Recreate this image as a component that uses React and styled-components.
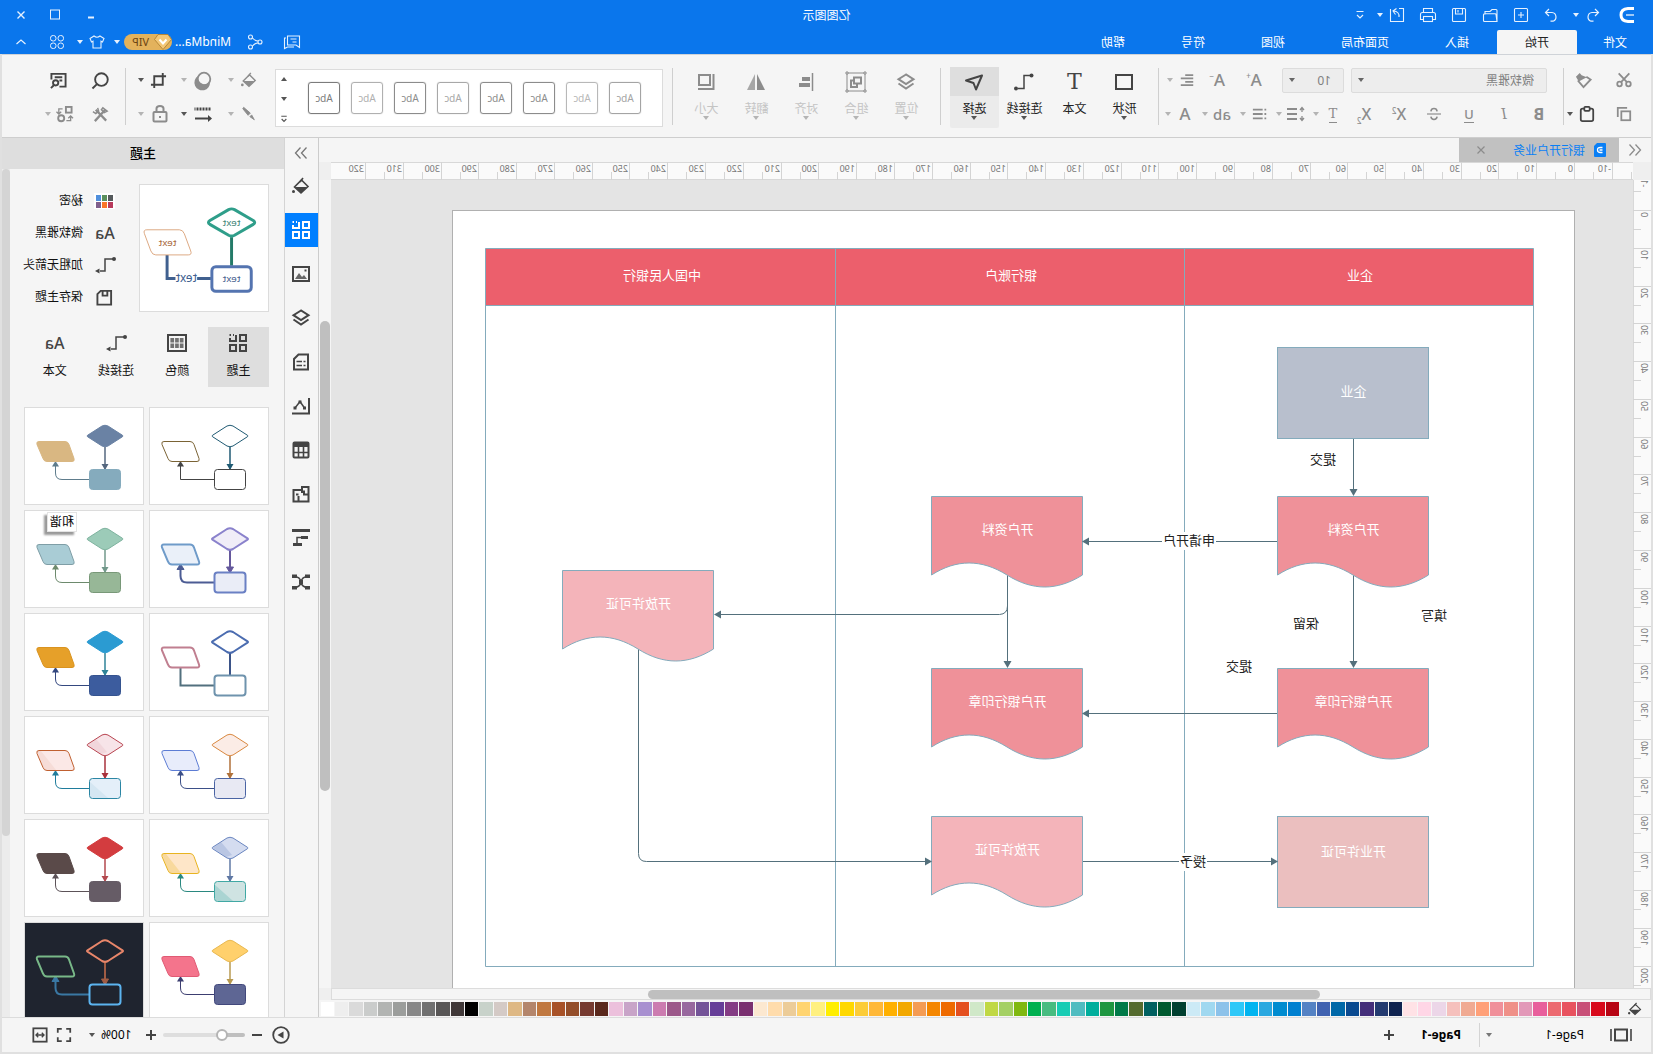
import React, { useState } from 'react';
import styled, { createGlobalStyle, css } from 'styled-components';

const GlobalStyle = createGlobalStyle`
    * { box-sizing:border-box; }
    body { margin:0; background:#f5f5f5; overflow:hidden;
        font-family:"Noto Sans", "Noto Sans CJK SC", sans-serif;
        font-size:12px; line-height:16px; color:#111;
    }
    button { border:0; padding:0; margin:0; background:none; font:inherit; color:inherit; cursor:pointer; }
    ul { list-style:none; margin:0; padding:0; }
    svg { display:block; }
`;

// the whole window is flipped left to right
const Window = styled.div`
    display:flex; flex-direction:column;
    height:100vh; overflow:hidden;
    transform:scaleX(-1);
`;

/* ---------- icons, 18 x 18 ---------- */

const icons = {
    undo: <path d="M7 3L3.5 6.5 7 10M3.5 6.5H10a4.5 4.5 0 0 1 1 8.7H8.5" />,
    redo: <path d="M11 3l3.5 3.5L11 10M14.5 6.5H8a4.5 4.5 0 0 0-1 8.7h2.5" />,
    add: <><rect x="2.5" y="2.5" width="13" height="13" rx="1" /><path d="M9 6v6M6 9h6" /></>,
    folder: <path d="M2 15.5V4.5q0-1 1-1h4l2 2h5v3M2 15.5l1-7q0-.8 1-.8h10.5q1 0 1 1v5.8q0 1-1 1z" />,
    save: <><path d="M2.5 3.5q0-1 1-1h11q1 0 1 1v11q0 1-1 1h-11q-1 0-1-1z" /><path d="M5.5 2.5V8h7V2.5M10 4v2.5" /></>,
    print: <><path d="M4.5 6.5v-4h9v4M4.5 13.5h-3v-5q0-2 2-2h11q2 0 2 2v5h-3" /><rect x="4.5" y="10.5" width="9" height="5" /></>,
    share: <path d="M7 2.5H2.5v13h13V3M7 11q-.5-5.500 5.500-6M9.500 2.500l3.500 2.500-2.500 3.500" />,
    more: <path d="M5.5 5.5h7M6 9l3 3 3-3" />,
    min: <path d="M6 11.5h6" strokeWidth="2" />,
    max: <rect x="4.5" y="4" width="9" height="9" />,
    close: <path d="M5.5 5.5l7 7M12.5 5.5l-7 7" />,
    comment: <><path d="M1.5 3H13.500v9H5l-3.500 2.500zM4.500 6h6M4.500 9h4" /><path d="M15 5h1.500v10.500L13.500 14H7" /></>,
    nodes: <><circle cx="13.5" cy="4" r="2" /><circle cx="4" cy="9" r="2" /><circle cx="13.5" cy="14" r="2" /><path d="M6 8q3 0 5.5-3M6 10q3 0 5.5 3" transform="matrix(1 0 0 1 0 0)" /></>,
    shirt: <path d="M6 3L2 5.5 3.500 9 5 8.200V15h8V8.200l1.500.8L16 5.5 12 3q-3 2.500-6 0z" />,
    clover: <><rect x="2.5" y="2.5" width="5.5" height="5.5" rx="2.5" /><rect x="10" y="2.5" width="5.5" height="5.5" rx="2.5" /><rect x="2.5" y="10" width="5.5" height="5.5" rx="2.5" /><rect x="10" y="10" width="5.5" height="5.5" rx="2.5" /></>,
    up: <path d="M4.5 11L9 7l4.5 4" />,
    cut: <><circle cx="4" cy="13.5" r="2.6" /><circle cx="14" cy="13.5" r="2.6" /><path d="M3 1.5L12.3 11.5M15 1.5L5.7 11.5" /></>,
    brush: <><path d="M6 5L1.5 8 9 16l6-7" /><path d="M5.5 5.5L11 3.5 13 1l4 4-3 5z" fill="currentColor" stroke="none" /></>,
    copy: <><rect x="2" y="6" width="10" height="10" /><path d="M5.5 2H16v10.5" /></>,
    paste: <><rect x="2" y="3" width="14" height="14" rx="2" /><rect x="6" y="1" width="6" height="4.5" rx="1" fill="#f5f5f5" /></>,
    align: <path d="M2 3.5h9M2 7.2h14M2 11h9M2 14.7h14" />,
    strike: <><path d="M0 9h18" strokeWidth="1.5" /><path d="M13 5.5Q12.5 2 9 2T5 5.5M5 12.5q.5 3.5 4 3.5t4-3.5" /></>,
    spacing: <><path d="M8 4h10M8 9h10M8 14h10" /><path d="M3 3v4M3 11v4M1 5l2-2.5L5 5M1 13l2 2.5L5 13" strokeWidth="1.3" /></>,
    bullets: <path d="M2 4h2M2 9h2M2 14h2M6 4h11M6 9h11M6 14h11" />,
    box: <rect x="1" y="2" width="16" height="14" strokeWidth="2" />,
    line: <><path d="M2.5 2.5H9v13h6" strokeWidth="1.5" /><circle cx="1.5" cy="2.5" r="2" fill="currentColor" stroke="none" /><circle cx="17" cy="15.5" r="2" fill="currentColor" stroke="none" /></>,
    lineArrow: <><path d="M0 3h9v12h5" strokeWidth="1.5" /><circle cx="0" cy="3" r="2" fill="currentColor" stroke="none" /><path d="M14.5 12.5v5L19 15z" fill="currentColor" stroke="none" /></>,
    pointer: <path d="M1 2.5L17 7.5 9.500 10 7 16.5z" strokeWidth="2" strokeLinejoin="round" />,
    layers: <><path d="M9 1.5l7.5 4.7L9 11 1.5 6.2z" /><path d="M1.5 10.5L9 15.5l7.5-5" /></>,
    group: <><rect x="0" y="0" width="18" height="18" strokeWidth="1" /><rect x="4" y="4.5" width="7" height="6" /><path d="M11 7.5h3V14H8v-3" /><path d="M-1-1h2v2h-2zM17-1h2v2h-2zM-1 17h2v2h-2zM17 17h2v2h-2z" fill="#f5f5f5" strokeWidth="1" /></>,
    alignLeft: <><path d="M2.5 0v18" strokeWidth="1.5" /><path d="M5 6h8M5 12h11" strokeWidth="4" /></>,
    flip: <><path d="M8 1v16H0z" fill="currentColor" stroke="none" /><path d="M10 1v16h8z" fill="currentColor" stroke="none" opacity=".75" /></>,
    resize: <><rect x="5" y="2" width="11" height="10" /><path d="M1.5 1v15H17" /></>,
    bucket: <><path d="M8.5 3L2 9.5 9 16l6.5-6z" strokeWidth="1.6" /><path d="M3 10h12l-6 6z" fill="currentColor" stroke="none" /><path d="M7 1l3 4" strokeWidth="1.6" /><circle cx="16.5" cy="14.5" r="1.5" fill="currentColor" stroke="none" /></>,
    effect: <><circle cx="8" cy="8" r="6.3" strokeWidth="1.8" /><path d="M2 11a7.8 7.8 0 1 0 12-6 7 7 0 0 1-12 6z" fill="currentColor" stroke="none" /></>,
    crop: <path d="M4.5 1v12.5H17M1 4.5h12.5V17" />,
    search: <><circle cx="8" cy="8" r="6.7" /><path d="M12.5 12.5L17.5 17.5" /></>,
    findPage: <><path d="M8 15.5H1.5V2h15v6M5 5.5h8M5 9h3" /><circle cx="12" cy="11.5" r="2.8" /><path d="M14 14l3 3" /></>,
    pen: <path d="M15 1.5L7.5 8l2.5 2.5L16 3zM6 10l2 2-5 3.5z" fill="currentColor" strokeWidth="1" />,
    dash: <><path d="M1.5 4h16" strokeDasharray="2 1" strokeWidth="3" /><path d="M3 13.5h14" /><path d="M4 10v7L0 13.5z" fill="currentColor" stroke="none" /></>,
    lock: <><rect x="2.5" y="7" width="13" height="9.5" rx="1" /><path d="M5.5 7V3.5Q5.5 1 9 1t3.5 2.5V7M9 11v2" /></>,
    tools: <><path d="M4 4l11 12M14 4L3 15.5" strokeWidth="2.4" /><path d="M2 5.5L6.5 2 8 4 5 7zM12 2l-1 3.5 3 2.5 3-2" strokeWidth="1.6" /></>,
    replace: <><rect x="1.5" y="1" width="6" height="6" /><circle cx="12.5" cy="13" r="3.2" /><path d="M11 3h4v5M7 15.5H2.5V11M5 13l-2.5-2.5L0 13M12.5 6l2.5 2.5L17.5 6" strokeWidth="1.4" /></>,
    chevrons: <path d="M9.5 3.5L4.5 9l5 5.5M15.500 3.5L10.5 9l5 5.5" strokeWidth="1.3" transform="translate(-1 0)" />,
    theme: <><rect x="1" y="1" width="6" height="6" /><path d="M11 1v6h6V4M13 1h1M16 1h1.5" /><rect x="1" y="11" width="6" height="6" /><rect x="11" y="11" width="6" height="6" /></>,
    image: <><rect x="1" y="2" width="16" height="14" /><path d="M15 14l-4-6-3 4-2-2-3 4z" fill="currentColor" stroke="none" opacity=".8" /><path d="M3.5 5.5h2" /></>,
    page: <><path d="M16 1.500H6.500L2 6v10.500h14z" transform="matrix(-1 0 0 1 18 0)" /><path d="M4.5 8.5h2M8 8.5h5.5M4.5 12.5h2M8 12.5h5.5" strokeWidth="1.6" /></>,
    chart: <><path d="M1 1v15.5H18" /><path d="M5.5 11l4.5-6.5L15 11" strokeWidth="1.5" /><path d="M4 9.5h3v3H4zM13.5 9.5h3v3h-3zM8.5 3.5h3v3h-3z" fill="currentColor" stroke="none" /></>,
    table: <><rect x="1.5" y="1.5" width="15" height="15" rx="1" /><path d="M1.5 4h15" strokeWidth="4" /><path d="M1.5 11.5h15M6.5 6v11M11.5 6v11" strokeWidth="1.6" /></>,
    floor: <path d="M1.5 2H8v3h8.500v11.500H1.5zM1.5 9.500H6V5.500M8 5v3M11.500 16v-5M11.500 9.500H14" />,
    gantt: <><path d="M0 1.5h18" strokeWidth="3" /><path d="M2 8.5h7M8 15.5h9" strokeWidth="3" /><path d="M9 8.5h4v6" strokeWidth="1.5" /></>,
    mind: <><path d="M2 3.5q6 0 7 5.5 1-5.5 7-5.5M2 14.5q6 0 7-5.5 1 5.5 7 5.5M7 9h4" strokeWidth="1.5" /><path d="M0 1.5h5V5H0zM13 1.5h5V5h-5zM0 13h5v3.5H0zM13 13h5v3.5h-5zM7 7h4v4H7z" fill="currentColor" stroke="none" /></>,
    disk: <><path d="M2 2h11l3.5 3.5V16.5H2z" /><path d="M6 2v5h5V2" /></>,
    swatches: <><rect x="0" y="1" width="18" height="16" /><path d="M2.5 4h3.7v4.5H2.5zM7.2 4h3.7v4.5H7.2zM11.9 4h3.7v4.5h-3.7zM2.5 9.5h3.7V14H2.5zM7.2 9.5h3.7V14H7.2zM11.9 9.5h3.7V14h-3.7z" fill="currentColor" stroke="none" opacity=".75" /></>,
    pages: <><rect x="3" y="3.5" width="12" height="11" /><path d="M-1 3v12M19 3v12" strokeWidth="1.6" /></>,
    plus: <path d="M9 4v10M4 9h10" />,
    minus: <path d="M4 9h10" />,
    play: <><circle cx="9" cy="9" r="7.8" strokeWidth="1.8" /><path d="M6.5 5.5v7L12.5 9z" fill="currentColor" stroke="none" /></>,
    full: <path d="M2 6.5V2h4.5M11.5 2H16v4.5M16 11.5V16h-4.5M6.5 16H2v-4.5" />,
    fit: <><rect x="1.5" y="1.5" width="15" height="15" /><path d="M5.5 9h7M7 6.5L4.5 9 7 11.5M11 6.5L13.5 9 11 11.5" strokeWidth="1.5" /></>,
};

const Icon = ({ name, size = 18, weight = 2 }) => (
    <svg width={size} height={size} viewBox="0 0 18 18" fill="none" stroke="currentColor"
        strokeWidth={weight} overflow="visible" aria-hidden="true">{icons[name]}</svg>
);

const Caret = styled.i`
    display:block; width:0; height:0;
    border:3px solid transparent; border-top:4px solid currentColor; border-bottom:0;
    ${({ $up }) => $up && css`border-top:0; border-bottom:4px solid currentColor;`}
`;

const Btn = styled.button`
    display:flex; align-items:center; justify-content:center; flex:none;
    width:24px; height:24px;
    margin-left:${({ $ml }) => $ml || 0}px;
    color:${({ $tone }) => $tone === 'dark' ? '#444' : $tone === 'light' ? '#e6f1fe' : '#8c8c8c'};
`;

const Drop = styled.button`
    display:flex; align-items:center; justify-content:center; flex:none;
    width:10px; height:20px;
    margin-left:${({ $ml }) => $ml || 0}px;
    color:${({ $tone }) => $tone === 'dark' ? '#555' : $tone === 'light' ? '#e6f1fe' : '#b4b4b4'};
`;

const IconBtn = ({ icon, label, weight, size, ...rest }) => (
    <Btn aria-label={label || icon} {...rest}><Icon name={icon} weight={weight} size={size} /></Btn>
);
const DropBtn = (props) => <Drop aria-label="more options" {...props}><Caret /></Drop>;

/* ---------- header ---------- */

const HeaderBlock = styled.header`
    flex:none; background:#0a76ec; color:#fff;
    .row { display:flex; align-items:center; justify-content:space-between; height:30px; }
    .row.menu { height:24px; align-items:stretch; }
    .side { display:flex; align-items:center; flex:1; padding:0 9px; }
    .side.end { justify-content:flex-end; }
    h1 { margin:0; padding-top:1px; font-size:12px; font-weight:400; }
    .logo { margin-left:5px; width:24px; display:flex; justify-content:center; }
    .account { margin:0 3px 0 12px; color:#fff; text-decoration:none; }
`;

const MenuTabs = styled.nav`display:flex;`;

const MenuTab = styled.button`
    padding:2px ${({ $narrow }) => $narrow ? 26 : 28}px 0;
    ${({ $on }) => $on && css`background:#f5f5f5; color:#222; border-radius:2px 2px 0 0;`}
`;

const Vip = styled.span`
    display:flex; align-items:center;
    width:48px; height:16px; border-radius:8px;
    background:#e3b25c; color:#6b4413;
    font-size:11px;
    svg { margin-right:5px; }
`;

const menus = ['文件', '开始', '插入', '页面布局', '视图', '符号', '帮助'];

const Header = () => {
    const [active, setActive] = useState(1);
    return (
        <HeaderBlock>
            <div className="row">
                <div className="side">
                    <div className="logo">
                        <svg width="16" height="16" viewBox="0 0 16 16" fill="none" stroke="#fff">
                            <path d="M1 1.5h6q7 .5 7 6.5t-7 6.5H1" strokeWidth="3" />
                            <path d="M1 8h8" strokeWidth="2" opacity=".6" />
                        </svg>
                    </div>
                    <IconBtn icon="undo" $tone="light" $ml={10} weight={1.2} />
                    <DropBtn $tone="light" />
                    <IconBtn icon="redo" $tone="light" $ml={8} weight={1.2} />
                    <IconBtn icon="add" $tone="light" $ml={6} weight={1.1} />
                    <IconBtn icon="folder" $tone="light" $ml={7} weight={1.1} />
                    <IconBtn icon="save" $tone="light" $ml={7} weight={1.1} />
                    <IconBtn icon="print" $tone="light" $ml={7} weight={1.1} />
                    <IconBtn icon="share" $tone="light" $ml={7} weight={1.1} />
                    <DropBtn $tone="light" />
                    <IconBtn icon="more" $tone="light" $ml={3} weight={1.2} />
                </div>
                <h1>亿图图示</h1>
                <div className="side end">
                    <IconBtn icon="min" $tone="light" />
                    <IconBtn icon="max" $tone="light" $ml={12} weight={1} />
                    <IconBtn icon="close" $tone="light" $ml={10} weight={1.4} />
                </div>
            </div>
            <div className="row menu">
                <MenuTabs>
                    {menus.map((m, i) => (
                        <MenuTab key={m} $narrow={i === 0} $on={i === active} onClick={() => setActive(i)}>{m}</MenuTab>
                    ))}
                </MenuTabs>
                <div className="side end">
                    <IconBtn icon="comment" $tone="light" weight={1.1} />
                    <IconBtn icon="nodes" $tone="light" $ml={13} weight={1.1} />
                    <a className="account" href="#account">MindMa...</a>
                    <Vip>
                        <svg width="18" height="16" viewBox="0 0 18 16">
                            <path d="M4 .5h10l3.5 5L9 15.5.5 5.5z" fill="#f3c777" stroke="#a97a2c" strokeWidth=".8" />
                            <path d="M5.5 5.5L9 9.5l3.5-4" fill="none" stroke="#fff" strokeWidth="2" />
                        </svg>
                        VIP
                    </Vip>
                    <DropBtn $tone="light" $ml={2} />
                    <IconBtn icon="shirt" $tone="light" $ml={3} weight={1.1} />
                    <DropBtn $tone="light" />
                    <IconBtn icon="clover" $tone="light" $ml={6} weight={1} />
                    <IconBtn icon="up" $tone="light" $ml={12} weight={1.2} />
                </div>
            </div>
        </HeaderBlock>
    );
};

/* ---------- ribbon ---------- */

const Frame = styled.div`
    display:flex; flex-direction:column; flex:1; min-height:0;
    border:2px solid #e0e0e0; border-top:0;
    background:#f5f5f5;
`;

const Ribbon = styled.div`
    display:flex; flex:none;
    height:84px; padding-top:8px;
    border-top:1px solid #cfd3d8; border-bottom:1px solid #cecece;
`;

const Group = styled.div`
    flex:none; width:${({ $w }) => $w}px;
    .line { display:flex; align-items:center; height:34px; }
`;

const Divider = styled.div`
    flex:none; width:1px; height:57px; margin-top:5px; background:#cfcfcf;
`;

const Field = styled.select`
    appearance:none; flex:none;
    width:${({ $w }) => $w}px; height:25px;
    margin-left:${({ $ml }) => $ml}px;
    padding:0 12px;
    border:1px solid #dcdcdc; border-radius:2px;
    background:#ededed url("data:image/svg+xml,%3Csvg xmlns='http://www.w3.org/2000/svg' width='6' height='4'%3E%3Cpath d='M0 0h6L3 4z' fill='%23666'/%3E%3C/svg%3E") no-repeat right 6px top 9px;
    color:#808080; font:12px "Noto Sans", "Noto Sans CJK SC", sans-serif;
`;

const Glyph = styled.span`
    font-size:${({ $size }) => $size || 17}px; line-height:20px;
    font-family:"Noto Sans", sans-serif;
    font-weight:${({ $bold }) => $bold ? 700 : 500};
    ${({ $serif }) => $serif && css`font-family:"DejaVu Serif", serif; font-weight:400;`}
    ${({ $under }) => $under && css`border-bottom:1px solid currentColor; line-height:16px;`}
    sub, sup { font-size:8px; line-height:0; }
`;

const Tools = styled.div`
    display:flex; gap:1px; flex:none; margin:4px 9px 0;
`;

const Tool = styled.button`
    display:flex; flex-direction:column; align-items:center;
    width:49px; height:61px; border-radius:2px;
    color:${({ $off }) => $off ? '#c4c4c4' : '#222'};
    background:${({ $on }) => $on ? '#ebebeb' : 'none'};
    .pic { display:flex; align-items:center; justify-content:center;
        width:100%; height:29px; padding-top:1px;
        color:${({ $off }) => $off ? '#8c8c8c' : '#444'};
        background:${({ $on }) => $on ? '#dedede' : 'none'};
    }
    .name { margin-top:6px; line-height:14px; }
    ${Caret} { color:${({ $off }) => $off ? '#b4b4b4' : '#555'}; }
`;

const Gallery = styled.div`
    display:flex; align-items:center; flex:none;
    width:388px; height:58px; margin:6px 0 0 9px; padding-left:21px;
    border:1px solid #dcdcdc; background:#fff;
    .arrows { display:flex; flex-direction:column; justify-content:space-between; align-items:center;
        margin:0 3px 0 auto; height:58px;
    }
`;

const StyleBox = styled.button`
    width:32px; height:32px; margin-right:11px; flex:none;
    border:1px solid ${({ $c }) => $c}; border-radius:3px;
    box-shadow:0 0 1px ${({ $c }) => $c};
    color:${({ $c }) => $c}; font-size:10px;
`;

const boxTones = ['#a4a4a4', '#b8b8b8', '#8c8c8c', '#8c8c8c', '#a8a8a8', '#8c8c8c', '#b0b0b0', '#7c7c7c'];

const tools = [
    { name: '形状', icon: 'box', drop: true },
    { name: '文本', glyph: <Glyph $serif $size={22}>T</Glyph> },
    { name: '连接线', icon: 'line', drop: true },
    { name: '选择', icon: 'pointer', drop: true, on: true },
];
const arrange = [
    { name: '位置', icon: 'layers' },
    { name: '组合', icon: 'group' },
    { name: '对齐', icon: 'alignLeft' },
    { name: '翻转', icon: 'flip' },
    { name: '大小', icon: 'resize' },
];

const Toolbar = () => (
    <Ribbon>
        <Group $w={87}>
            <div className="line">
                <IconBtn icon="cut" size={16} $ml={15} />
                <IconBtn icon="brush" size={17} $ml={16} />
            </div>
            <div className="line">
                <IconBtn icon="copy" size={16} $ml={15} />
                <IconBtn icon="paste" size={16} $tone="dark" $ml={13} />
                <DropBtn $tone="dark" />
            </div>
        </Group>
        <Divider />
        <Group $w={404}>
            <div className="line">
                <Field aria-label="font" $w={196} $ml={16}><option>微软雅黑</option></Field>
                <Field aria-label="font size" $w={62} $ml={7}><option>10</option></Field>
                <Btn $ml={16} aria-label="larger"><Glyph>A<sup>+</sup></Glyph></Btn>
                <Btn $ml={13} aria-label="smaller"><Glyph>A<sup>−</sup></Glyph></Btn>
                <IconBtn icon="align" size={16} $ml={6} />
                <DropBtn />
            </div>
            <div className="line">
                <Btn $ml={12}><Glyph $bold $size={16}>B</Glyph></Btn>
                <Btn $ml={11}><Glyph $size={14} $serif><i>I</i></Glyph></Btn>
                <Btn $ml={11}><Glyph $size={13} $under>U</Glyph></Btn>
                <IconBtn icon="strike" size={14} $ml={11} />
                <Btn $ml={11}><Glyph $size={16}>X<sup>2</sup></Glyph></Btn>
                <Btn $ml={11}><Glyph $size={16}>X<sub>2</sub></Glyph></Btn>
                <Btn $ml={7}><Glyph $size={13} $serif $under>T</Glyph></Btn>
                <DropBtn />
                <IconBtn icon="spacing" $ml={3} />
                <DropBtn />
                <IconBtn icon="bullets" size={16} $ml={2} />
                <DropBtn />
                <Btn $ml={4}><Glyph $size={15}>ab</Glyph></Btn>
                <DropBtn />
                <Btn $ml={3}><Glyph>A</Glyph></Btn>
                <DropBtn />
            </div>
        </Group>
        <Divider />
        <Tools>
            {tools.map(t => (
                <Tool key={t.name} $on={t.on}>
                    <span className="pic">{t.glyph || <Icon name={t.icon} />}</span>
                    <span className="name">{t.name}</span>
                    {t.drop && <Caret />}
                </Tool>
            ))}
        </Tools>
        <Divider />
        <Tools>
            {arrange.map(t => (
                <Tool key={t.name} $off>
                    <span className="pic"><Icon name={t.icon} /></span>
                    <span className="name">{t.name}</span>
                    <Caret />
                </Tool>
            ))}
        </Tools>
        <Divider />
        <Gallery>
            {boxTones.map((c, i) => <StyleBox key={i} $c={c}>Abc</StyleBox>)}
            <div className="arrows">
                <Drop $tone="dark" aria-label="up"><Caret $up /></Drop>
                <Drop $tone="dark" aria-label="down"><Caret /></Drop>
                <Drop $tone="dark" aria-label="all styles"><Icon name="more" weight={1.5} size={14} /></Drop>
            </div>
        </Gallery>
        <Group $w={149}>
            <div className="line">
                <IconBtn icon="bucket" size={16} $ml={14} />
                <DropBtn $ml={1} />
                <IconBtn icon="effect" $ml={11} />
                <DropBtn $ml={2} />
                <IconBtn icon="crop" size={17} $tone="dark" $ml={8} />
                <DropBtn $tone="dark" $ml={1} />
            </div>
            <div className="line">
                <IconBtn icon="pen" size={16} $ml={14} />
                <DropBtn $ml={1} />
                <IconBtn icon="dash" $tone="dark" $ml={11} />
                <DropBtn $tone="dark" $ml={2} />
                <IconBtn icon="lock" $ml={7} />
                <DropBtn $ml={2} />
            </div>
        </Group>
        <Divider />
        <Group $w={100}>
            <div className="line">
                <IconBtn icon="search" size={17} $tone="dark" $ml={12} />
                <IconBtn icon="findPage" size={17} $tone="dark" $ml={18} />
            </div>
            <div className="line">
                <IconBtn icon="tools" size={17} $ml={12} />
                <IconBtn icon="replace" size={17} $ml={12} />
                <DropBtn />
            </div>
        </Group>
    </Ribbon>
);

/* ---------- work area ---------- */

const Main = styled.main`
    display:flex; flex:1; min-height:0;
`;

const Work = styled.section`
    display:flex; flex-direction:column; flex:1; min-width:0;
`;

const DocTabs = styled.div`
    display:flex; flex:none; height:24px;
    border-right:1px solid #ccc;
    .tab { display:flex; align-items:center;
        width:160px; margin-left:4px; padding:0 10px 0 13px;
        background:#c1c1c1; color:#0a7ff5;
        .title { margin-left:9px; flex:1; padding-top:2px; }
    }
`;

const Board = styled.div`
    display:grid; flex:1; min-height:0;
    grid-template-columns:18px minmax(0, 1fr) 13px;
    grid-template-rows:18px minmax(0, 1fr) 12px;
    .ruler { background:#fafafa; }
`;

const Corner = styled.div`
    background:#efefef;
    ${({ $end }) => $end && css`border-right:1px solid #ccc;`}
`;

const Canvas = styled.div`
    overflow:hidden; background:#e4e4e4;
    padding:30px 0 0 58px;
`;

const Paper = styled.svg`
    background:#fff; border:1px solid #b0b0b0;
    text { font-size:13px; text-anchor:middle; dominant-baseline:central; fill:#222; }
    text.light { fill:#fff; }
    .wire { fill:none; stroke:#54707c; }
    .lane { fill:none; stroke:#84abbc; }
    .shape { stroke:#84abbc; }
    .head { fill:#54707c; }
`;

const VScroll = styled.div`
    display:flex; justify-content:center; border-right:1px solid #ccc;
    padding-top:141px;
    &:after { content:""; width:10px; height:470px; border-radius:5px; background:#bfbfbf; }
`;

const HScroll = styled.div`
    grid-column:1 / 3; padding:1px 0 0 330px; border:1px solid #dcdcdc;
    &:after { content:""; display:block; width:68%; height:9px; border-radius:5px; background:#bfbfbf; }
`;

// pixels for ten millimetres
const STEP = 37.78;

const TopRuler = () => (
    <svg className="ruler" width="100%" height="18">
        <path d="M0 .5H3000M0 17.5H3000" stroke="#d8d8d8" />
        {Array.from({ length: 34 }, (_, k) => k - 1).map(i => {
            const x = Math.round(58 + i * STEP);
            return (
                <g key={i}>
                    <path d={`M${x + .5} 0V18M${x - 18.5} 10V18`} stroke="#d4d4d4" />
                    <text x={x + 2} y="10" fontSize="9" fill="#777">{i * 10}</text>
                </g>
            );
        })}
    </svg>
);

const SideRuler = () => (
    <svg className="ruler" width="18" height="100%">
        <path d="M17.5 0V3000" stroke="#d8d8d8" />
        {Array.from({ length: 22 }, (_, k) => k - 1).map(i => {
            const y = Math.round(30 + i * STEP);
            return (
                <g key={i}>
                    <path d={`M0 ${y + .5}H18M10 ${y + 19.5}H18`} stroke="#d4d4d4" />
                    <text transform={`translate(10 ${y + 2}) rotate(-90)`} textAnchor="end" fontSize="9" fill="#777">{i * 10}</text>
                </g>
            );
        })}
    </svg>
);

const Doc = ({ x, y, label, fill = '#ef9199' }) => (
    <g>
        <path className="shape" fill={fill}
            d={`M${x} ${y}h151v78.5c-25-16-50-16-75.5 0s-50 16-75.5 0z`} />
        <text className="light" x={x + 75} y={y + 32}>{label}</text>
    </g>
);

const Rect = ({ x, y, label, fill, top = 43 }) => (
    <g>
        <rect className="shape" x={x} y={y} width="151" height="91" fill={fill} />
        <text className="light" x={x + 75} y={y + top}>{label}</text>
    </g>
);

const Head = ({ x, y, turn = 0 }) => (
    <path className="head" d="M0 0L-7-4V4z" transform={`translate(${x} ${y}) rotate(${turn})`} />
);

const lanes = ['企业', '银行账户', '中国人民银行'];

const Diagram = () => (
    <Paper width="1123" height="820" viewBox="79 211 1121 818">
        <rect x="119.5" y="248.5" width="1048" height="57" fill="#ec5f6c" />
        <path className="lane" d="M119.5 248.5h1048v718h-1048zM119.5 305.5h1048M468.5 248.5v718M817.5 248.5v718" />
        {lanes.map((l, i) => <text key={l} className="light" x={293 + i * 349} y="275">{l}</text>)}

        <path className="wire" d="M299.5 438V490M299.5 574V662" />
        <path className="wire" d="M375 541.5H437M491 541.5H577" />
        <path className="wire" d="M645.5 574V662M645.5 606q0 8 8 8.500H934" />
        <path className="wire" d="M375 713.5H577M570 861.5H474M446 861.5H380" />
        <path className="wire" d="M1014.5 649V853.5q0 8-8 8H726" />
        <Head x={299.5} y={496} turn={90} />
        <Head x={299.5} y={668} turn={90} />
        <Head x={645.5} y={668} turn={90} />

        <Rect x={224.5} y={347.5} label="企业" fill="#b8bfcd" />
        <Doc x={224.5} y={496.5} label="开户资料" />
        <Doc x={224.5} y={668.5} label="开户银行印章" />
        <Rect x={224.5} y={816.5} label="开业许可证" fill="#ebbfbf" top={34} />
        <Doc x={570.5} y={496.5} label="开户资料" />
        <Doc x={570.5} y={668.5} label="开户银行印章" />
        <Doc x={570.5} y={816.5} label="开放许可证" fill="#f4b4ba" />
        <Doc x={939.5} y={570.5} label="开放许可证" fill="#f4b4ba" />
        <Head x={571} y={541.5} />
        <Head x={571} y={713.5} />
        <Head x={939} y={614.5} />
        <Head x={721} y={861.5} turn={180} />
        <Head x={375} y={861.5} turn={180} />

        <rect x="438" y="532" width="53" height="18" fill="#fff" />
        <rect x="446" y="853" width="28" height="18" fill="#fff" />
        <text x="330" y="459">提交</text>
        <text x="464" y="540">申请开户</text>
        <text x="219" y="615">填写</text>
        <text x="347" y="623">保留</text>
        <text x="414" y="666">提交</text>
        <text x="460" y="861">授予</text>
    </Paper>
);

const Palette = styled.div`
    display:flex; align-items:stretch; flex:none; height:17px; padding:2px 1px 1px 0;
    border-right:1px solid #ccc;
    .fill { width:32px; flex:none; display:flex; align-items:center; justify-content:center; color:#444; }
    .colors { display:flex; flex:1; gap:1px; }
`;

const Swatch = styled.button`
    flex:1; min-width:0; background:${({ $c }) => $c};
`;

const colors = `b70514 d80a1c c85078 e8525f ec6a70 e85f9c e298b8 ef9088 f0909a ffa078 f0aa92 f5c0bc ecd6e8 ffd6e6 ffe2e6
0f2350 233a70 442e7a 0a4a90 0068a8 4062b0 5482c4 0080d0 008cd0 2aa8e0 00b4f0 2ec8f8 8cc2ea a0d8f0 cceaf6 004030 005a30
006060 556b2f 007a48 1e9640 00ae9c 50bcc0 18ccb4 48bc80 00b050 80b810 a4d064 c0d844 d0e8c8 e45020 ee6a00 f48600 f49c54
f2a800 ffb000 ffb838 fccc38 ffd800 ffee00 fff080 ffd470 eccc98 ffdcac fce8d0 7a3070 843c84 663e98 745498 98689e 9c588a
cc7cb0 a890d0 c8a4c8 ecc0dc 5a281c 763a30 944e2a a85228 c07840 b4866c deb884 d4cac6 c8d2ca 000000 403838 585656 707070
888888 9c9e9c b2b4b2 cacccb dadada eeeeee ffffff`.split(/\s+/);

const Workspace = () => (
    <Work>
        <DocTabs>
            <IconBtn icon="chevrons" label="tabs" $ml={4} />
            <div className="tab">
                <svg width="12" height="14" viewBox="0 0 12 14">
                    <path d="M0 1q0-1 1-1h8l3 3v10q0 1-1 1H1q-1 0-1-1z" fill="#0a7ff5" />
                    <path d="M3.5 4.5h2q3 0 3 2.5t-3 2.5h-2M3.5 7h3" fill="none" stroke="#fff" strokeWidth="1.3" />
                </svg>
                <span className="title">银行开户业务</span>
                <IconBtn icon="close" label="close tab" weight={1.2} />
            </div>
        </DocTabs>
        <Board>
            <Corner />
            <TopRuler />
            <Corner $end />
            <SideRuler />
            <Canvas><Diagram /></Canvas>
            <VScroll />
            <HScroll />
            <Corner $end />
        </Board>
        <Palette>
            <div className="fill"><Icon name="bucket" size={14} /></div>
            <div className="colors">
                {colors.map((c, i) => <Swatch key={i} $c={'#' + c} aria-label={'#' + c} />)}
            </div>
        </Palette>
    </Work>
);

/* ---------- icon rail ---------- */

const Rail = styled.nav`
    display:flex; flex-direction:column; gap:10px; flex:none;
    width:34px; border-right:1px solid #d4d4d4;
    .fold { display:flex; align-items:center; justify-content:center;
        height:21px; padding-top:8px; color:#777;
    }
`;

const RailBtn = styled.button`
    display:flex; align-items:center; justify-content:center; flex:none;
    width:100%; height:34px;
    color:${({ $on }) => $on ? '#fff' : '#444'};
    background:${({ $on }) => $on ? '#007fff' : 'none'};
`;

// the fold chevrons point outwards
const Flip = styled.span`
    display:block; transform:rotate(180deg);
`;

const railIcons = ['bucket', 'theme', 'image', 'layers', 'page', 'chart', 'table', 'floor', 'gantt', 'mind'];

const SideRail = () => {
    const [active, setActive] = useState(1);
    return (
        <Rail>
            <button className="fold" aria-label="fold"><Flip><Icon name="chevrons" /></Flip></button>
            {railIcons.map((n, i) => (
                <RailBtn key={n} $on={i === active} aria-label={n} onClick={() => setActive(i)}><Icon name={n} /></RailBtn>
            ))}
        </Rail>
    );
};

/* ---------- theme panel ---------- */

const Panel = styled.aside`
    display:flex; flex-direction:column; flex:none; width:282px;
    h2 { margin:0; height:31px; line-height:31px; text-align:center; flex:none;
        background:#dedede; font-size:13px; font-weight:500; color:#000;
    }
    .body { display:flex; flex:1; min-height:0; overflow:hidden; }
    .content { flex:1; min-width:0; padding:15px 14px 0 15px; }
    .bar { flex:none; width:8px; background:#ececec; }
    .bar:after { content:""; display:block; height:667px; border-radius:4px; background:#d4d4d4; }
    .current { display:flex; }
    .preview { flex:none; background:#fff; border:1px solid #dcdcdc; }
`;

const Options = styled.ul`
    margin-left:22px; padding-top:1px; flex:1; min-width:0;
    button { display:flex; align-items:center; gap:10px; height:32px; white-space:nowrap; }
    .pic { display:flex; justify-content:center; width:24px; color:#444; }
`;

const ThemeTabs = styled.div`
    display:flex; margin-top:14px;
`;

const ThemeTab = styled.button`
    display:flex; flex-direction:column; align-items:center; flex:1;
    height:60px; padding-top:5px; gap:9px;
    background:${({ $on }) => $on ? '#dedede' : 'none'};
    .pic { display:flex; align-items:center; height:22px; color:#444; }
`;

const Cards = styled.div`
    display:grid; grid-template-columns:1fr 1fr; gap:5px; margin-top:20px;
`;

const Card = styled.button`
    position:relative; height:98px;
    border:1px solid #dcdcdc; background:${({ $bg }) => $bg || '#fff'};
`;

const Tip = styled.span`
    position:absolute; top:1px; right:22px;
    padding:1px 2px; border:1px solid #e4e4e4; background:#fff; color:#000;
    box-shadow:3px 3px 2px #999;
`;

const Grid6 = () => (
    <svg width="21" height="16" viewBox="0 0 21 16">
        <rect width="21" height="16" fill="#fff" />
        {['#555a5c', '#5a8f5c', '#4f8fdc', '#b83a5c', '#fb7528', '#80608c'].map((c, i) => (
            <rect key={c} x={2 + (i % 3) * 6} y={2 + Math.floor(i / 3) * 7} width="5" height="6" fill={c} />
        ))}
    </svg>
);

const Preview = () => (
    <svg className="preview" width="130" height="128" viewBox="0 0 130 128" fill="none" fontSize="10" textAnchor="middle">
        <path d="M37 53V82" stroke="#237a68" strokeWidth="3" />
        <path d="M58 95H72M94 95h8.5V71" stroke="#40608f" strokeWidth="3" />
        <path d="M15 36L34 25q3-1.5 6 0L59 36q3 2 0 4L40 51q-3 1.5-6 0L15 40q-3-2 0-4z" stroke="#2f9e8a" strokeWidth="3" />
        <rect x="17" y="83" width="40" height="25" rx="4" stroke="#5474b0" strokeWidth="3" />
        <path d="M91 45.5h33q4 0 2.500 4L120 67q-1.500 4-5 4H82q-4 0-2.500-4L86 49.5q1.500-4 5-4z" stroke="#dca982" transform="translate(-1 0)" />
        <text x="37" y="42" fill="#3f8577">text</text>
        <text x="37" y="99" fill="#46608f">text</text>
        <text x="102" y="62" fill="#a9693c">text</text>
        <text x="83" y="99" fontSize="12" fill="#40608f">text</text>
    </svg>
);

// d: diamond, p: parallelogram, r: rectangle as [fill, stroke]; a, b: connectors
const themes = [
    { d: ['#fff', '#1f5a73'], p: ['#fff', '#7a6335'], r: ['#fff', '#444'], a: '#1f5a73', b: '#444', sharp: true },
    { d: ['#6a82a4', '#6a82a4'], p: ['#d9b782', '#d9b782'], r: ['#85abbd', '#85abbd'], a: '#55677f', b: '#5e7c8c' },
    { d: ['#f0edf8', '#8a82cc'], p: ['#eaf0f9', '#6f9bc9'], r: ['#eaedf7', '#6a80c4'], a: '#65589c', b: '#4c5c94', w: 2 },
    { d: ['#9ccbb8', '#7fb39f'], p: ['#a9ccd5', '#7f9ea6'], r: ['#97b797', '#789878'], a: '#72988b', b: '#6d8a6d', tip: '和谐' },
    { d: ['#fff', '#4b6cb0'], p: ['#fff', '#c07f90'], r: ['#fff', '#6f93ad'], a: '#3b5488', b: '#52707e', w: 2, sharp: true, plain: true },
    { d: ['#2b9bd2', '#2b9bd2'], p: ['#e6a029', '#d99320'], r: ['#3c5c9e', '#35538f'], a: '#2f8398', b: '#34487f' },
    { d: ['#fbece6', '#d9883f'], p: ['#e8ecfb', '#5c7cd4'], r: ['#e8e9f3', '#4a64a4'], a: '#b0713a', b: '#3b4f88' },
    { d: ['#f7e4e8', '#b84450'], p: ['#fbe8e6', '#c06030'], r: ['#e4eff9', '#2b86a4'], a: '#a8323c', b: '#1f7c9c', shine: .08 },
    { d: ['#d4dcf0', '#6a86c0'], p: ['#fee6c8', '#e8b420'], r: ['#cfe3e2', '#40a8a4'], a: '#5f78a4', b: '#2a8880', shine: .25 },
    { d: ['#d33c3f', '#d33c3f'], p: ['#5a4a49', '#5a4a49'], r: ['#665c66', '#665c66'], a: '#b3484e', b: '#5c5258' },
    { d: ['#ffd06c', '#e8b850'], p: ['#f4748c', '#e05a74'], r: ['#5e6694', '#42487c'], a: '#b89a50', b: '#3c3e70' },
    { d: ['none', '#e8866a'], p: ['none', '#78b888'], r: ['none', '#5cb4f0'], a: '#a05c44', b: '#3a78a4', w: 2, bg: '#1f242f' },
];

const ThemeArt = ({ t }) => {
    const w = t.w || 1;
    return (
        <svg width="118" height="96" viewBox="1 1 118 96" fill="none" strokeWidth={w}>
            <path d="M39 40V62" stroke={t.a} strokeWidth={w === 2 ? 2 : 1.5} />
            <path d={t.sharp ? 'M55 72.5H88.5V55' : 'M55 72.5H82q6.5 0 6.5-6.5V55'} stroke={t.b} />
            {!t.plain && <path d="M35.5 57h7L39 63z" fill={t.a} stroke={t.a} strokeWidth={w - 1} />}
            {!t.plain && <path d="M85 59.5h7L88.5 54z" fill={t.b} stroke={t.b} strokeWidth={w - 1} />}
            <path d="M21.5 28.3L36 19q3-1.5 6 0l14.5 9.3q1 .7 0 1.4L42 39q-3 1.5-6 0L21.5 29.7q-1-.7 0-1.4z" fill={t.d[0]} stroke={t.d[1]} />
            <rect x="23.5" y="62.5" width="31" height="20" rx="3" fill={t.r[0]} stroke={t.r[1]} />
            <path d="M79 34.5H105q3 0 2 3L101 51.5q-1 3-4 3H72q-3 0-2-3L75 37.5q1-3 4-3z" fill={t.p[0]} stroke={t.p[1]} />
            {t.shine && (
                <g opacity={t.shine}>
                    <path d="M54 66v13q0 3-3 3H36z" fill={t.r[1]} />
                    <path d="M48 23l8 6-13 9-6-2z" fill={t.d[1]} />
                    <path d="M106 38l-5 13q-1 3-4 3h-9l15-19h2q2 0 1 3z" fill={t.p[1]} />
                </g>
            )}
        </svg>
    );
};

const Aa = <Glyph $size={16}>Aa</Glyph>;

const tabs = [
    ['主题', <Icon name="theme" />],
    ['颜色', <Icon name="swatches" />],
    ['连接线', <Icon name="lineArrow" />],
    ['文本', Aa],
];
const options = [
    ['秘密', <Grid6 />],
    ['微软雅黑', Aa],
    ['加粗无箭头', <Icon name="lineArrow" />],
    ['保存主题', <Icon name="disk" size={17} />],
];

const ThemePanel = () => {
    const [tab, setTab] = useState(0);
    return (
        <Panel>
            <h2>主题</h2>
            <div className="body">
                <div className="content">
                    <div className="current">
                        <Preview />
                        <Options>
                            {options.map(([name, pic]) => (
                                <li key={name}><button><span className="pic">{pic}</span>{name}</button></li>
                            ))}
                        </Options>
                    </div>
                    <ThemeTabs>
                        {tabs.map(([name, pic], i) => (
                            <ThemeTab key={name} $on={i === tab} onClick={() => setTab(i)}>
                                <span className="pic">{pic}</span>{name}
                            </ThemeTab>
                        ))}
                    </ThemeTabs>
                    <Cards>
                        {themes.map((t, i) => (
                            <Card key={i} $bg={t.bg} aria-label={`theme ${i + 1}`}>
                                <ThemeArt t={t} />
                                {t.tip && <Tip>{t.tip}</Tip>}
                            </Card>
                        ))}
                    </Cards>
                </div>
                <div className="bar" />
            </div>
        </Panel>
    );
};

/* ---------- status bar ---------- */

const StatusBlock = styled.footer`
    display:flex; align-items:center; justify-content:space-between; flex:none;
    height:35px; border-top:1px solid #dcdcdc; background:#f5f5f5; color:#000;
    .part { display:flex; align-items:center; }
    .part.end { padding-right:26px; }
    .pick { display:flex; justify-content:space-between; align-items:center; width:95px; margin-left:25px; }
    .pick ${Caret} { color:#777; margin-right:-3px; }
    .rule { width:1px; height:24px; margin-left:9px; background:#d4d4d4; }
    .current { margin-left:18px; font-weight:700; }
    .zoom { margin-left:7px; }
`;

const Zoom = styled.input`
    appearance:none; width:82px; height:4px; margin:0; border-radius:2px;
    background:linear-gradient(to right, #bfbfbf ${({ value }) => value}%, #dedede ${({ value }) => value}%);
    &::-webkit-slider-thumb { appearance:none;
        width:12px; height:12px; border-radius:50%;
        border:2px solid #b4b4b4; background:#fff;
    }
`;

const StatusBar = () => {
    const [zoom, setZoom] = useState(23);
    return (
        <StatusBlock>
            <div className="part">
                <IconBtn icon="pages" label="pages" $tone="dark" $ml={18} />
                <button className="pick">Page-1 <Caret /></button>
                <span className="rule" />
                <button className="current">Page-1</button>
                <IconBtn icon="plus" label="new page" $tone="dark" $ml={20} />
            </div>
            <div className="part end">
                <IconBtn icon="play" label="present" $tone="dark" />
                <IconBtn icon="minus" label="zoom out" $tone="dark" />
                <Zoom type="range" aria-label="zoom" value={zoom} onChange={e => setZoom(e.target.value)} />
                <IconBtn icon="plus" label="zoom in" $tone="dark" />
                <span className="zoom">100%</span>
                <DropBtn $tone="dark" $ml={4} />
                <IconBtn icon="full" label="full screen" size={16} $tone="dark" $ml={11} />
                <IconBtn icon="fit" label="fit width" size={16} $tone="dark" />
            </div>
        </StatusBlock>
    );
};

const App = () => (
    <>
        <GlobalStyle />
        <Window>
            <Header />
            <Frame>
                <Toolbar />
                <Main>
                    <Workspace />
                    <SideRail />
                    <ThemePanel />
                </Main>
                <StatusBar />
            </Frame>
        </Window>
    </>
);

export default App;
